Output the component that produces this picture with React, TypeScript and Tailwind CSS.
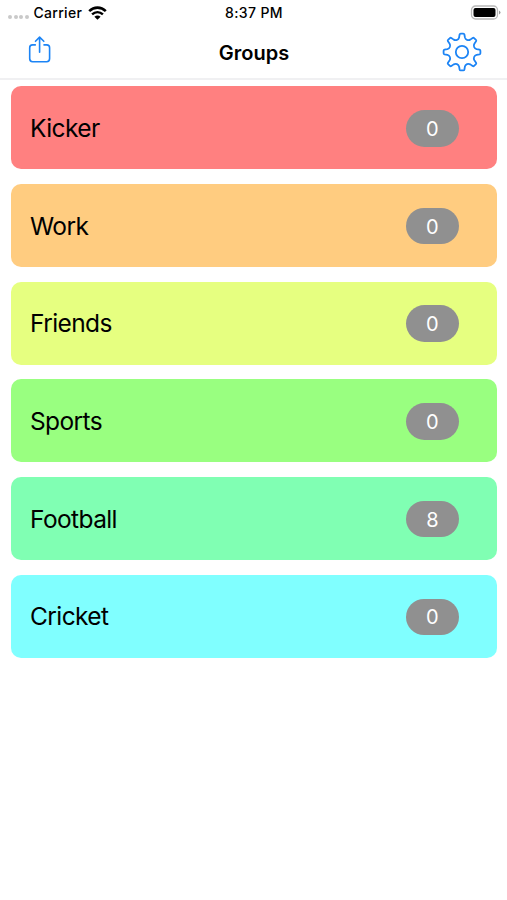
const groups = [
  { name: "Kicker", count: 0, color: "bg-[#ff8080]" },
  { name: "Work", count: 0, color: "bg-[#ffcc80]" },
  { name: "Friends", count: 0, color: "bg-[#e6ff80]" },
  { name: "Sports", count: 0, color: "bg-[#99ff80]" },
  { name: "Football", count: 8, color: "bg-[#80ffb3]" },
  { name: "Cricket", count: 0, color: "bg-[#80ffff]" },
];

// Eight-toothed gear outline centred on the origin.
function gearPath() {
  const parts: string[] = [];
  for (let i = 0; i < 8; i++) {
    const a = (i * Math.PI) / 4;
    const p = (x: number, y: number) =>
      `${(x * Math.cos(a) - y * Math.sin(a)).toFixed(2)} ${(x * Math.sin(a) + y * Math.cos(a)).toFixed(2)}`;
    parts.push(
      `${i === 0 ? "M" : "L"}${p(-2.9, -14.6)}`,
      `L${p(-2.4, -17.5)}`,
      `Q${p(-2.2, -18.4)} ${p(-1.3, -18.4)}`,
      `L${p(1.3, -18.4)}`,
      `Q${p(2.2, -18.4)} ${p(2.4, -17.5)}`,
      `L${p(2.9, -14.6)}`,
      `C${p(3.5, -12.2)} ${p(6.15, -11.1)} ${p(8.27, -12.37)}`,
    );
  }
  return parts.join(" ") + "Z";
}

function Wifi() {
  return (
    <svg className="ml-[6px] h-[14px] w-[19px]" viewBox="0 0 19 14" fill="none" stroke="#000">
      <path d="M1.2 5.1C6 .5 13 .5 17.8 5.1" strokeWidth="2.6" />
      <path d="M4.1 8.4C7.3 5.4 11.7 5.4 14.9 8.4" strokeWidth="2.4" />
      <path d="M6.4 10.8Q9.5 8.2 12.6 10.8L9.5 13.8Z" fill="#000" stroke="none" />
    </svg>
  );
}

function StatusBar() {
  return (
    <div className="grid h-[26px] grid-cols-3 items-center pb-px text-[14px] font-medium tracking-[0.1px]">
      <div className="flex items-center pl-[8px]">
        <div className="mt-[9px] mr-[5px] flex gap-[1.5px]">
          {[0, 1, 2, 3].map((n) => (
            <span key={n} className="size-[4px] rounded-full bg-[#c9c9c9]" />
          ))}
        </div>
        <span className="tracking-[0.3px]">Carrier</span>
        <Wifi />
      </div>
      <span className="pl-px text-center tracking-[0.35px]">8:37 PM</span>
      <div className="flex justify-end pr-[6px]">
        <svg className="h-[15px] w-[31px]" viewBox="0 0 31 15">
          <rect x="1.5" y="1" width="26" height="13" rx="4" fill="#fff" stroke="#b8b8b8" strokeWidth="1.3" />
          <rect x="3.5" y="3" width="22" height="9" rx="2" fill="#000" />
          <path d="M29 5.5Q32 7.5 29 9.5Z" fill="#999" />
        </svg>
      </div>
    </div>
  );
}

export default function App() {
  return (
    <main className="h-[900px] w-[507px] overflow-hidden bg-white font-['Inter','Liberation_Sans',sans-serif] text-black">
      <StatusBar />
      <header className="flex h-[54px] items-center justify-between border-b-2 border-[#f0f0f2] pr-[25px] pl-[27px]">
        <button aria-label="Share" className="w-[39px]">
          <svg className="-mt-[5px] h-[29px] w-[25px]" viewBox="0 0 25 29" fill="none" stroke="#1c84f5" strokeWidth="1.6" strokeLinecap="round" strokeLinejoin="round">
            <path d="M8.3 9.9H5.6Q2.7 9.9 2.7 12.8V23.6Q2.7 26.7 5.6 26.7H19.7Q22.6 26.7 22.6 23.6V12.8Q22.6 9.9 19.7 9.9H17" />
            <path d="M12.6 17.3V2.2M8.5 6.3L12.6 2.1L16.8 6.3" />
          </svg>
        </button>
        <h1 className="pt-[2px] text-[20px] font-semibold">Groups</h1>
        <button aria-label="Settings">
          <svg className="size-[40px]" viewBox="-20 -20 40 40" fill="none" stroke="#1c84f5" strokeWidth="1.8" strokeLinejoin="round">
            <path d={gearPath()} />
            <circle r="6.2" />
          </svg>
        </button>
      </header>
      <ul className="flex flex-col gap-[14.7px] pt-[6.4px] pr-[10px] pl-[11px]">
        {groups.map((g) => (
          <li key={g.name} className={`flex h-[83px] items-center justify-between rounded-[10px] pr-[37.8px] pl-[19px] ${g.color}`}>
            <span className="pt-px text-[24.5px] tracking-[-0.6px]">{g.name}</span>
            <span className="mt-px flex h-[36.6px] w-[53.6px] items-center justify-center rounded-full bg-[#909090] pt-px text-[20px] text-white">
              {g.count}
            </span>
          </li>
        ))}
      </ul>
    </main>
  );
}
